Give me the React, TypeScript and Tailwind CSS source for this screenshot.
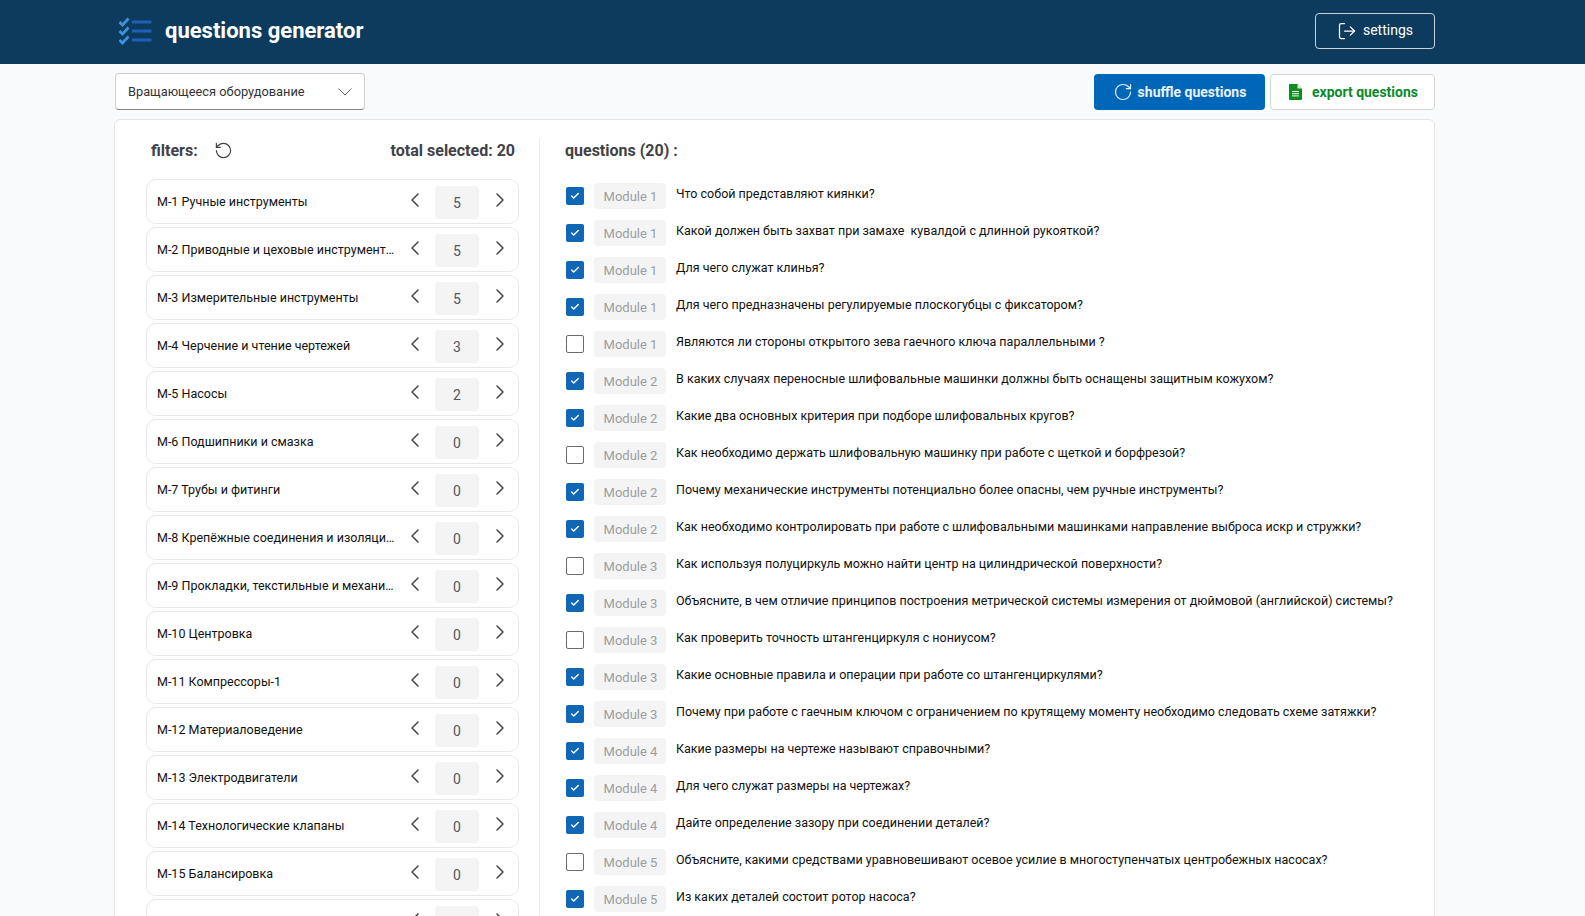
import { ChevronLeft, ChevronRight, RotateCcw, RotateCw, LogOut, Check } from "lucide-react";

const modules = [
  ["М-1 Ручные инструменты", 5],
  ["М-2 Приводные и цеховые инструмент…", 5],
  ["М-3 Измерительные инструменты", 5],
  ["М-4 Черчение и чтение чертежей", 3],
  ["М-5 Насосы", 2],
  ["М-6 Подшипники и смазка", 0],
  ["М-7 Трубы и фитинги", 0],
  ["М-8 Крепёжные соединения и изоляци…", 0],
  ["М-9 Прокладки, текстильные и механи…", 0],
  ["М-10 Центровка", 0],
  ["М-11 Компрессоры-1", 0],
  ["М-12 Материаловедение", 0],
  ["М-13 Электродвигатели", 0],
  ["М-14 Технологические клапаны", 0],
  ["М-15 Балансировка", 0],
  ["", 0],
] as const;

const questions: [boolean, number, string][] = [
  [true, 1, "Что собой представляют киянки?"],
  [true, 1, "Какой должен быть захват при замахе  кувалдой с длинной рукояткой?"],
  [true, 1, "Для чего служат клинья?"],
  [true, 1, "Для чего предназначены регулируемые плоскогубцы с фиксатором?"],
  [false, 1, "Являются ли стороны открытого зева гаечного ключа параллельными ?"],
  [true, 2, "В каких случаях переносные шлифовальные машинки должны быть оснащены защитным кожухом?"],
  [true, 2, "Какие два основных критерия при подборе шлифовальных кругов?"],
  [false, 2, "Как необходимо держать шлифовальную машинку при работе с щеткой и борфрезой?"],
  [true, 2, "Почему механические инструменты потенциально более опасны, чем ручные инструменты?"],
  [true, 2, "Как необходимо контролировать при работе с шлифовальными машинками направление выброса искр и стружки?"],
  [false, 3, "Как используя полуциркуль можно найти центр на цилиндрической поверхности?"],
  [true, 3, "Объясните, в чем отличие принципов построения метрической системы измерения от дюймовой (английской) системы?"],
  [false, 3, "Как проверить точность штангенциркуля с нониусом?"],
  [true, 3, "Какие основные правила и операции при работе со штангенциркулями?"],
  [true, 3, "Почему при работе с гаечным ключом с ограничением по крутящему моменту необходимо следовать схеме затяжки?"],
  [true, 4, "Какие размеры на чертеже называют справочными?"],
  [true, 4, "Для чего служат размеры на чертежах?"],
  [true, 4, "Дайте определение зазору при соединении деталей?"],
  [false, 5, "Объясните, какими средствами уравновешивают осевое усилие в многоступенчатых центробежных насосах?"],
  [true, 5, "Из каких деталей состоит ротор насоса?"],
];

function Logo() {
  return (
    <svg width="34" height="30" viewBox="0 0 34 30" fill="none">
      {[6, 15, 24].map((y) => (
        <g key={y}>
          <path d={`M1.5 ${y} l3 3 l6 -6.5`} stroke="#3d93dc" strokeWidth="2.6" />
          <rect x="14" y={y - 1.5} width="19.5" height="3" fill="#1f5fb4" />
        </g>
      ))}
    </svg>
  );
}

function SheetIcon() {
  return (
    <svg width="13" height="16" viewBox="0 0 13 16">
      <path d="M1 0h7.5L13 4.5V15a1 1 0 0 1-1 1H1a1 1 0 0 1-1-1V1a1 1 0 0 1 1-1z" fill="#0a8f1e" />
      <path d="M8.5 0v4.5H13z" fill="#d7efd9" />
      <path d="M3 7.5h7M3 9.7h7M3 11.9h7" stroke="#fff" strokeWidth="1" />
    </svg>
  );
}

export default function App() {
  return (
    <div className="h-screen overflow-hidden bg-[#f9fafc] font-['Roboto',sans-serif] text-[12.5px] text-[#111]">
      <header className="flex h-16 items-center justify-between bg-[#0d3b5e] pb-[2px] pl-[118px] pr-[150px]">
        <div className="flex items-center gap-[13px]">
          <Logo />
          <span className="text-[22px] font-bold leading-[30px] text-white">questions generator</span>
        </div>
        <button className="flex h-9 w-[120px] items-center justify-center gap-[6px] rounded border border-[#c9d1d8] pb-[2px] text-sm text-white">
          <LogOut size={20} strokeWidth={1.5} className="mt-[2px]" />
          settings
        </button>
      </header>

      <div className="pl-[115px] pr-[150px]">
        <div className="mt-[9px] flex items-center justify-between">
          <button className="flex h-[37px] w-[250px] items-center justify-between rounded border border-[#cfcfcf] border-b-[#8a8a8a] bg-white pl-3 pr-[12px] text-[12.8px] text-[#333]">
            Вращающееся оборудование
            <svg width="14" height="8" viewBox="0 0 14 8" fill="none">
              <path d="M0.5 0.5 L7 7 L13.5 0.5" stroke="#666" strokeWidth="1" />
            </svg>
          </button>
          <div className="flex gap-[5px]">
            <button className="flex h-9 w-[171px] items-center justify-center gap-[5px] rounded bg-[#0067b8] text-sm font-bold text-[#e8f2fb]">
              <RotateCw size={20} strokeWidth={1.4} />
              shuffle questions
            </button>
            <button className="flex h-9 w-[165px] items-center justify-center gap-[10px] rounded border border-[#d4d4d4] bg-white pl-[2px] text-sm font-bold text-[#0a8a2a]">
              <SheetIcon />
              export questions
            </button>
          </div>
        </div>

        <main className="-ml-px mt-[9px] flex rounded-md border border-[#e4e4e4] bg-white pt-[19px]">
          <section className="w-[425px] shrink-0 border-r border-[#ececec] pl-[31px] pr-[20px]">
            <div className="flex h-6 items-center justify-between pl-[5px] pr-[4px] text-base font-bold text-[#3f4246]">
              <div className="flex items-center gap-[16px]">
                <span>filters:</span>
                <RotateCcw size={19} strokeWidth={1.5} className="-mt-[2px] text-[#3f4246]" />
              </div>
              <span>total selected: 20</span>
            </div>
            <div className="mt-[16px] flex flex-col gap-[3px]">
              {modules.map(([name, n], i) => (
                <div key={i} className="flex h-[45px] items-center rounded-[10px] border border-[#e8e8e8] bg-white pl-[10px] pr-[6px]">
                  <span className="mt-[1px] min-w-0 flex-1 whitespace-nowrap">{name}</span>
                  <ChevronLeft size={24} strokeWidth={1.5} className="-mt-[3px] shrink-0 text-[#444]" />
                  <span className="ml-[8px] mr-[9px] mt-[1px] flex h-[33px] w-11 shrink-0 items-center justify-center rounded bg-[#f4f4f4] pt-[2px] text-sm text-[#52585e]">
                    {n}
                  </span>
                  <ChevronRight size={24} strokeWidth={1.5} className="-mt-[3px] shrink-0 text-[#444]" />
                </div>
              ))}
            </div>
          </section>

          <section className="min-w-0 flex-1 pl-[25px]">
            <h2 className="flex h-6 items-center text-base font-bold text-[#3f4246]">questions (20) :</h2>
            <div className="mt-[20px] flex flex-col gap-[11px]">
              {questions.map(([on, m, text]) => (
                <div key={text} className="flex h-[26px] items-start pl-[1px]">
                  <span
                    className={
                      on
                        ? "mt-[4px] flex h-[18px] w-[18px] shrink-0 items-center justify-center rounded-[2px] bg-[#0f67b5] text-white"
                        : "mt-[4px] h-[18px] w-[18px] shrink-0 rounded-[2px] border border-[#6b6b6b] bg-white"
                    }
                  >
                    {on && <Check size={10} strokeWidth={3.2} />}
                  </span>
                  <span className="ml-[10px] flex h-[26px] w-[72px] shrink-0 items-center justify-center rounded bg-[#f4f4f4] pl-[1px] pt-[2px] text-[13px] text-[#9a9ea3]">
                    Module {m}
                  </span>
                  <span className="ml-[10px] mt-[2px] whitespace-pre">{text}</span>
                </div>
              ))}
            </div>
          </section>
        </main>
      </div>
    </div>
  );
}
